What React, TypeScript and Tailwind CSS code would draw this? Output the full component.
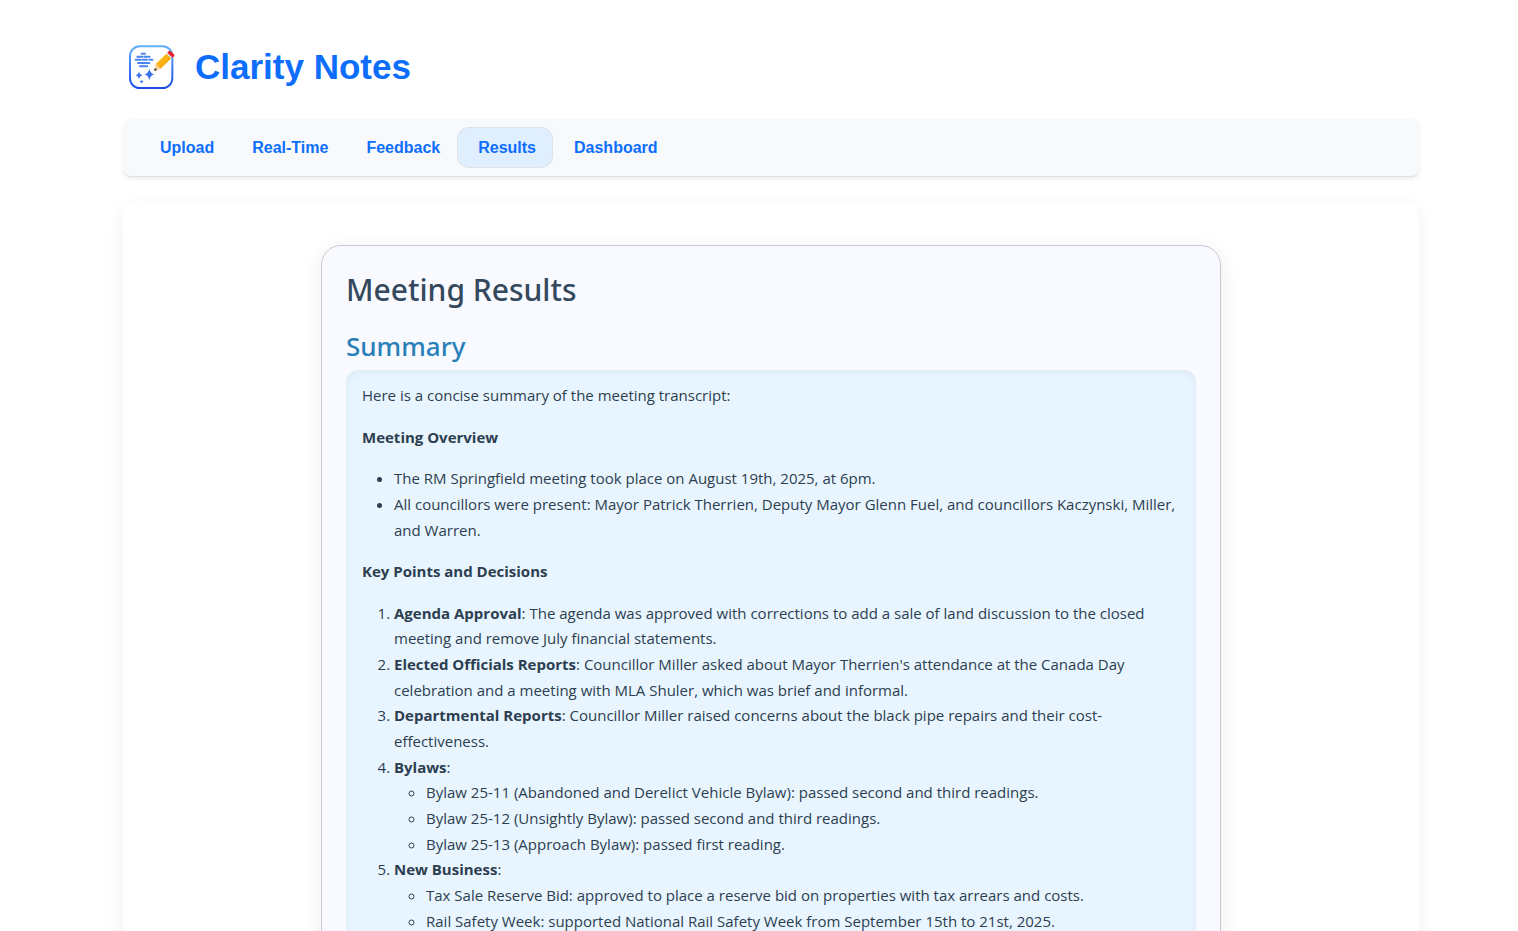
import type { ReactNode } from "react";

const tabs = ["Upload", "Real-Time", "Feedback", "Results", "Dashboard"];

function Logo() {
  return (
    <svg viewBox="21 15 150 150" className="size-[50px] shrink-0" role="img" aria-label="Clarity Notes logo">
      <defs>
        <linearGradient id="frame" x1="0" y1="0" x2="0" y2="1">
          <stop offset="0" stopColor="#5fb0fd" />
          <stop offset="0.5" stopColor="#3f78ee" />
          <stop offset="1" stopColor="#1d4fe8" />
        </linearGradient>
        <linearGradient id="body" x1="0" y1="0" x2="1" y2="1">
          <stop offset="0" stopColor="#ffc928" />
          <stop offset="1" stopColor="#f59a00" />
        </linearGradient>
      </defs>
      <rect x="30" y="31" width="127" height="125" rx="29" fill="#fff" stroke="url(#frame)" strokeWidth="6" />
      <g stroke="#4a86f0" strokeWidth="6" strokeLinecap="round">
        <path d="M65 53h10M52 62h15M73 62h16M47 71h14M67 71h14M88 71h9M54 81h34M60 91h22" />
      </g>
      <g fill="#3a70ea">
        <path d="M88 98 Q91 112 103 115 Q91 118 88 133 Q85 118 73 115 Q85 112 88 98Z" />
        <path d="M57 107 Q59 116 67 118 Q59 120 57 129 Q55 120 47 118 Q55 116 57 107Z" />
        <path d="M65 132 Q67 136 71 137 Q67 138 65 142 Q63 138 59 137 Q63 136 65 132Z" />
      </g>
      <path d="M103 105 L107 84 L122 98Z" fill="#f6cf9a" />
      <path d="M103 105 L104 96 L111 102Z" fill="#222" />
      <path d="M107 84 L139 53 L154 67 L122 98Z" fill="url(#body)" />
      <path d="M139 53 L143 49 L158 63 L154 67Z" fill="#d7dce3" />
      <path d="M142 50 L146 46 Q149 43 152 46 L162 55 Q165 58 162 61 L158 65Z" fill="#e8212b" />
    </svg>
  );
}

function BulletList({ children }: { children: ReactNode }) {
  return <ul className="list-[circle] pl-8">{children}</ul>;
}

export default function App() {
  return (
    <div className="min-h-screen bg-white pl-6 font-['Open_Sans','Noto_Sans',sans-serif] text-[#2c3e50]">
      <div className="mx-auto max-w-[1296px] pt-[41px] pb-10">
        <header className="flex items-center gap-[18px] pb-7 pl-1">
          <Logo />
          <h1 className="pt-0.5 font-['Liberation_Sans',Arial,sans-serif] text-[35px] leading-[42px] font-bold text-[#0d6efd]">
            Clarity Notes
          </h1>
        </header>

        <nav
          aria-label="Main"
          className="flex flex-wrap rounded-lg border-b border-[#dee2e6] bg-[#f8f9fb] px-4 py-2 font-['Liberation_Sans',Arial,sans-serif] shadow-[0_2px_4px_rgba(0,0,0,0.07)]"
        >
          {tabs.map((tab) => (
            <a
              key={tab}
              href={`#${tab.toLowerCase()}`}
              aria-current={tab === "Results" ? "page" : undefined}
              className="rounded-xl border border-transparent py-2 pr-4 pl-5 text-base leading-[23px] font-bold text-[#0d6efd] aria-[current=page]:border-[#dee2e6] aria-[current=page]:bg-[#e0efff]"
            >
              {tab}
            </a>
          ))}
        </nav>

        <main className="mt-6 rounded-2xl bg-white px-6 py-11 shadow-[0_4px_20px_rgba(0,0,0,0.06)]">
          <section className="mx-auto max-w-[900px] rounded-[20px] border border-[#c8cad0] bg-[#f9faff] px-6 pt-[25px] pb-6 shadow-[0_4px_20px_rgba(0,0,0,0.08)]">
            <h2 className="mb-5 font-['Noto_Sans',sans-serif] text-[30px] leading-[38px] font-medium text-[#34495e]">Meeting Results</h2>
            <h3 className="mb-[7px] font-['Noto_Sans',sans-serif] text-[26px] leading-[34px] font-medium text-[#2980b9]">Summary</h3>
            <div className="space-y-4 rounded-xl bg-[#e8f5ff] px-4 py-[13px] text-[15px] leading-[1.71] shadow-[inset_0_2px_8px_rgba(0,0,0,0.05)]">
              <p>Here is a concise summary of the meeting transcript:</p>
              <p className="font-bold">Meeting Overview</p>
              <ul className="list-disc pl-8">
                <li>The RM Springfield meeting took place on August 19th, 2025, at 6pm.</li>
                <li>
                  All councillors were present: Mayor Patrick Therrien, Deputy Mayor Glenn Fuel, and councillors
                  Kaczynski, Miller, and Warren.
                </li>
              </ul>
              <p className="font-bold">Key Points and Decisions</p>
              <ol className="list-decimal pl-8">
                <li>
                  <strong>Agenda Approval</strong>: The agenda was approved with corrections to add a sale of land
                  discussion to the closed meeting and remove July financial statements.
                </li>
                <li>
                  <strong>Elected Officials Reports</strong>: Councillor Miller asked about Mayor Therrien's attendance
                  at the Canada Day celebration and a meeting with MLA Shuler, which was brief and informal.
                </li>
                <li>
                  <strong>Departmental Reports</strong>: Councillor Miller raised concerns about the black pipe repairs
                  and their cost-effectiveness.
                </li>
                <li>
                  <strong>Bylaws</strong>:
                  <BulletList>
                    <li>Bylaw 25-11 (Abandoned and Derelict Vehicle Bylaw): passed second and third readings.</li>
                    <li>Bylaw 25-12 (Unsightly Bylaw): passed second and third readings.</li>
                    <li>Bylaw 25-13 (Approach Bylaw): passed first reading.</li>
                  </BulletList>
                </li>
                <li>
                  <strong>New Business</strong>:
                  <BulletList>
                    <li>Tax Sale Reserve Bid: approved to place a reserve bid on properties with tax arrears and costs.</li>
                    <li>Rail Safety Week: supported National Rail Safety Week from September 15th to 21st, 2025.</li>
                  </BulletList>
                </li>
              </ol>
            </div>
          </section>
        </main>
      </div>
    </div>
  );
}
